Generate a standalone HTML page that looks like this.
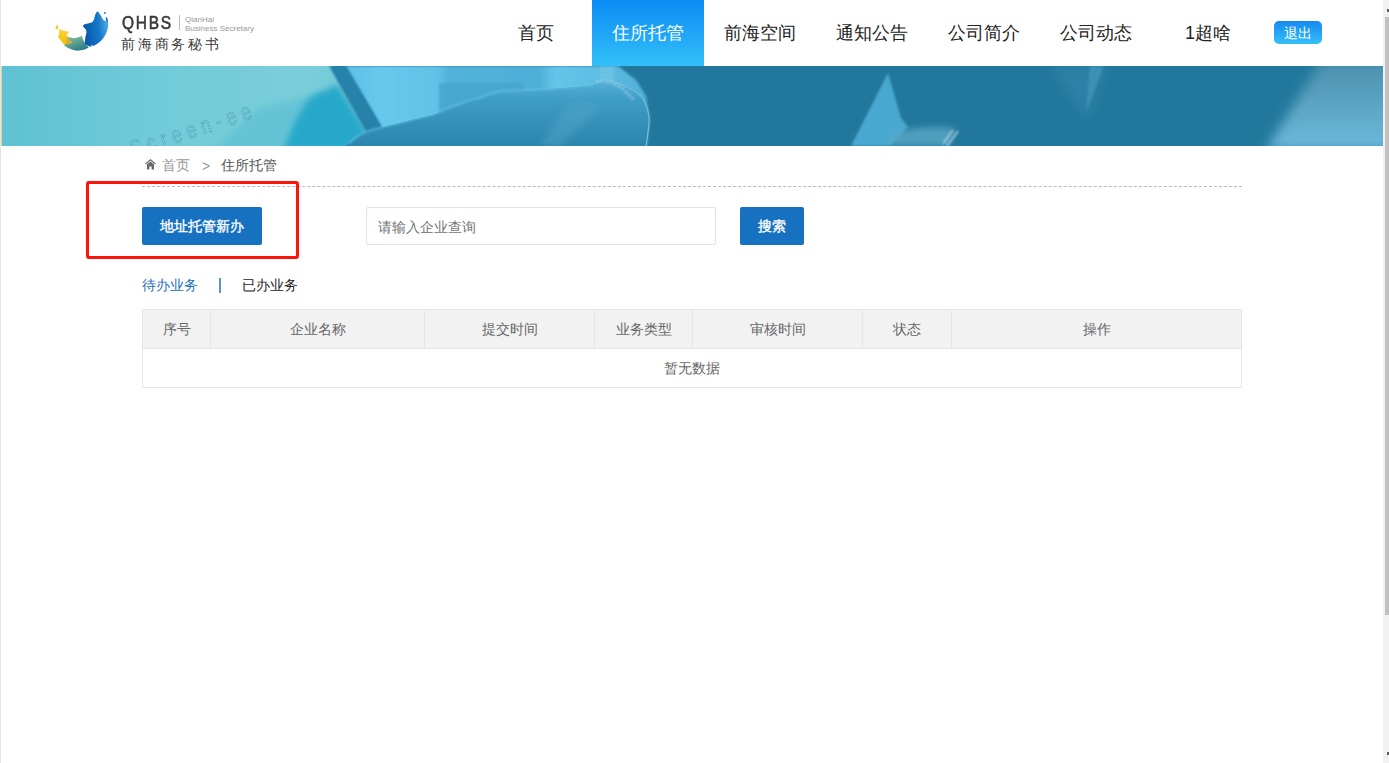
<!DOCTYPE html>
<html><head><meta charset="utf-8">
<style>
html,body{margin:0;padding:0;}
body{width:1389px;height:763px;overflow:hidden;position:relative;background:#fff;font-family:"Liberation Sans",sans-serif;color:#333;}
.abs{position:absolute;}
.lb{left:0;top:0;width:1px;height:763px;background:#e4e4e7;}
.sb{left:1383px;top:0;width:6px;height:763px;background:#f1f1f1;}
.thumb{left:1385px;top:17px;width:4px;height:598px;background:#c1c1c1;}
.nav{top:1px;height:65px;width:112px;line-height:65px;text-align:center;font-size:18px;color:#222;}
.nav.on{top:0;height:66px;line-height:67px;background:linear-gradient(#0b8bf4,#33c0f9);color:#fff;}
.logout{left:1274px;top:21px;width:48px;height:23px;border-radius:5px;background:linear-gradient(#1589f0,#35c0f8);color:#fff;font-size:14px;line-height:25px;font-weight:500;text-align:center;}
.banner{left:1px;top:66px;width:1382px;height:80px;overflow:hidden;background:#22789c;}
.crumb{top:157px;font-size:14px;line-height:16px;}
.dash{left:142px;top:186px;width:1100px;height:0;border-top:1px dashed #bbb;}
.redbox{left:86px;top:181px;width:207px;height:72px;border:3px solid #ff1409;border-radius:3px;}
.btn{top:207px;height:38px;background:#1671c1;color:#fff;font-size:14px;line-height:38px;text-align:center;border-radius:2px;font-weight:normal;-webkit-text-stroke:0.35px #fff;}
.inp{left:366px;top:207px;width:348px;height:36px;border:1px solid #e2e2e2;border-radius:2px;font-size:14px;line-height:38px;color:#737373;}
.tab{top:277px;font-size:14px;line-height:16px;}
table.t{position:absolute;left:142px;top:309px;border-collapse:collapse;width:1100px;font-size:14px;color:#666;table-layout:fixed;}
table.t td,table.t th{border:1px solid #e6e6e6;height:37px;padding:1px 0 0;text-align:center;font-weight:normal;}
table.t th{background:#f2f2f2;}
</style></head><body>
<div class="abs lb"></div>

<!-- logo -->
<svg class="abs" style="left:50px;top:5px" width="65" height="53" viewBox="0 0 936 763">
  <defs>
    <linearGradient id="gb" x1="0" y1="0.2" x2="1" y2="0"><stop offset="0" stop-color="#0a58ad"/><stop offset="0.55" stop-color="#1479c8"/><stop offset="1" stop-color="#62b8ea"/></linearGradient>
    <linearGradient id="gg" x1="0" y1="0" x2="0.6" y2="1"><stop offset="0" stop-color="#8cc2a2"/><stop offset="0.5" stop-color="#62a290"/><stop offset="1" stop-color="#2c7d8c"/></linearGradient>
    <linearGradient id="gy" x1="0" y1="0" x2="0" y2="1"><stop offset="0" stop-color="#fbd544"/><stop offset="1" stop-color="#f1bd00"/></linearGradient>
  </defs>
  <path d="M215 445 C260 455 300 470 350 478 C390 470 430 455 462 445 C470 490 490 540 560 610 C520 640 460 657 400 657 C330 652 260 625 205 582 C225 540 230 490 215 445 Z" fill="url(#gg)"/>
  <path d="M130 345 C170 360 220 375 272 385 C262 405 245 425 242 445 C260 490 300 520 325 545 C290 558 240 568 205 570 C175 535 140 495 115 458 C135 420 135 380 130 345 Z" fill="url(#gy)"/>
  <path d="M242 450 C262 490 300 522 325 545 C290 556 258 562 232 566 C238 520 240 480 242 450Z" fill="#c9a846" opacity="0.8"/>
  <path d="M98 283 C115 290 122 320 112 348 C95 352 72 338 78 322 C90 318 92 300 98 283 Z" fill="#f6c913"/>
  <path d="M685 92 C700 95 715 120 735 160 C750 190 765 215 785 228 C810 238 835 245 838 268 C842 320 825 400 780 460 C730 530 660 580 595 602 C570 600 530 580 505 562 C500 520 505 470 520 420 C528 395 530 370 510 345 C490 320 470 305 478 290 C490 278 530 268 575 258 C610 250 625 235 635 200 C650 140 665 92 685 92 Z" fill="url(#gb)"/>
  <path d="M600 572 C612 578 618 592 606 606 C592 604 588 590 600 572Z" fill="#fff"/>
  <circle cx="790" cy="115" r="13" fill="#1a78c8"/>
  <path d="M806 168 C828 172 840 222 830 258 C810 250 798 205 806 168Z" fill="#1a78c8"/>
</svg>
<div class="abs" style="left:122px;top:12px;font-size:18px;line-height:22px;letter-spacing:2px;color:#3a3a3a;-webkit-text-stroke:0.6px #3a3a3a;transform:scaleX(0.86);transform-origin:0 0;">QHBS</div>
<div class="abs" style="left:179px;top:15px;width:1px;height:15px;background:#bbb"></div>
<div class="abs" style="left:185px;top:15px;font-size:8px;line-height:9px;color:#999;">QianHai<br>Business Secretary</div>
<div class="abs" style="left:121px;top:36px;font-size:14px;line-height:16px;letter-spacing:2.8px;color:#3a3a3a;">前海商务秘书</div>

<!-- nav -->
<div class="abs nav" style="left:480px">首页</div>
<div class="abs nav on" style="left:592px">住所托管</div>
<div class="abs nav" style="left:704px">前海空间</div>
<div class="abs nav" style="left:816px">通知公告</div>
<div class="abs nav" style="left:928px">公司简介</div>
<div class="abs nav" style="left:1040px">公司动态</div>
<div class="abs nav" style="left:1152px">1超啥</div>
<div class="abs logout">退出</div>

<!-- banner -->
<svg class="abs" style="left:1px;top:66px" width="1382" height="80" viewBox="1 66 1382 80">
<defs>
<linearGradient id="bt" x1="0" y1="0" x2="1" y2="0"><stop offset="0" stop-color="#5fc1d3"/><stop offset="0.45" stop-color="#72cbd8"/><stop offset="0.8" stop-color="#79ced9"/><stop offset="1" stop-color="#70c9d7"/></linearGradient>
<linearGradient id="bm" x1="0" y1="0" x2="1" y2="0.6"><stop offset="0" stop-color="#6cc6d6" stop-opacity="0.3"/><stop offset="0.45" stop-color="#50bad3"/><stop offset="0.8" stop-color="#28a9cb"/><stop offset="1" stop-color="#1ea5ca"/></linearGradient>
<linearGradient id="bs" x1="0" y1="0" x2="1" y2="0"><stop offset="0" stop-color="#5cc0e4"/><stop offset="0.12" stop-color="#68c8ec"/><stop offset="0.3" stop-color="#62c2e6"/><stop offset="0.34" stop-color="#52b2d9"/><stop offset="0.64" stop-color="#50b0d7"/><stop offset="0.69" stop-color="#66c4e8"/><stop offset="0.84" stop-color="#5ebde2"/><stop offset="1" stop-color="#4eaed6"/></linearGradient>
<linearGradient id="bh" x1="0" y1="0" x2="0" y2="1"><stop offset="0" stop-color="#55b0d8"/><stop offset="0.3" stop-color="#3f9cc4"/><stop offset="1" stop-color="#2c85ac"/></linearGradient>
<linearGradient id="br" x1="0" y1="0" x2="0" y2="1"><stop offset="0" stop-color="#4a8fae"/><stop offset="0.45" stop-color="#5aa2c1"/><stop offset="1" stop-color="#6cbbde"/></linearGradient>
<filter id="bl1" x="-20%" y="-20%" width="140%" height="140%"><feGaussianBlur stdDeviation="1"/></filter>
<filter id="bl3" x="-30%" y="-30%" width="160%" height="160%"><feGaussianBlur stdDeviation="3"/></filter>
<filter id="bl6" x="-30%" y="-30%" width="160%" height="160%"><feGaussianBlur stdDeviation="6"/></filter>
</defs>
<rect x="1" y="66" width="1382" height="80" fill="#22789c"/>
<polygon points="1,66 331,66 376,146 1,146" fill="url(#bt)"/>
<path d="M215 150 C235 130 250 114 262 108 C280 103 300 98 314 95 C322 92 330 89 337 86 L376 150 Z" fill="#5dbfd4" opacity="0.7" filter="url(#bl3)"/>
<path d="M284 150 C292 126 302 104 314 95 C322 92 330 89 337 85 L378 150 Z" fill="#25a8cb" filter="url(#bl3)"/>
<text x="0" y="0" transform="translate(133 157) rotate(-18) scale(0.9 1.15)" font-family="Liberation Sans" font-size="20" fill="none" stroke="#3f8c9e" stroke-width="0.9" stroke-dasharray="1.4 1" opacity="0.6" letter-spacing="6">Screen-ee</text>
<rect x="0" y="66" width="2" height="80" fill="#d8d8a0"/>
<polygon points="345,66 618,66 636,80 646,96 650,120 647,146 392,146" fill="url(#bs)" filter="url(#bl1)"/><rect x="600" y="66" width="14" height="20" fill="#7ccbe8" opacity="0.45" filter="url(#bl1)"/><rect x="439" y="83" width="85" height="30" fill="#46a5ce" opacity="0.8" filter="url(#bl1)"/>
<polygon points="329,66 346,66 393,146 374,146" fill="#2782a9" filter="url(#bl1)"/>
<path d="M346 146 C352 140 362 132 375 129 C395 124 415 119 432 115 C450 108 465 101 480 98 C488 94 495 92 502 91 C520 90 535 90 548 89 C565 88 580 86 593 85 C600 82 604 80 606 80 C620 84 632 88 640 94 C646 102 649 112 649 120 C648 130 647 138 646 146 Z" fill="url(#bh)"/>
<path d="M349 144 C352 140 362 132 375 129 C395 124 415 119 432 115 C450 108 465 101 480 98 C488 94 495 92 502 91 C520 90 535 90 548 89 C565 88 580 86 593 85" fill="none" stroke="#6cc8ea" stroke-width="1.6" opacity="0.75" filter="url(#bl1)"/>
<path d="M540 146 C552 128 562 110 572 102 L600 104 C590 120 570 136 562 146 Z" fill="#5aa9cc" opacity="0.4" filter="url(#bl3)"/>
<path d="M606 80 C622 84 634 90 641 96 C647 104 650 116 649 124 C648 132 647 140 646 146" fill="none" stroke="#8ccbe3" stroke-width="1.2" opacity="0.7"/>
<path d="M596 82 C605 80 614 83 622 88 L634 100" fill="none" stroke="#a6d8ec" stroke-width="3" stroke-dasharray="2.5 2" opacity="0.7" filter="url(#bl1)"/>
<polygon points="888,73 901,118 908,127 890,146 851,146" fill="#4aa8d0" filter="url(#bl1)"/>
<path d="M893 132 C910 128 935 126 955 128 L948 146 L888 146 Z" fill="#5aa9c6" opacity="0.8" filter="url(#bl3)"/>
<path d="M943 144 L953 130 M947 146 L958 131" stroke="#b8dcea" stroke-width="1.3" filter="url(#bl1)"/>
<path d="M1050 66 L1106 66 L1088 120 Z" fill="#3a8db2" opacity="0.45" filter="url(#bl6)"/><path d="M1090 66 L1104 66 L1086 112 Z" fill="#4a9cc0" opacity="0.6" filter="url(#bl1)"/>
<polygon points="1322,60 1395,60 1395,150 1266,150" fill="url(#br)" filter="url(#bl6)"/>
<rect x="1383" y="60" width="10" height="90" fill="#fff"/>
</svg>

<!-- breadcrumb -->
<svg class="abs" style="left:145px;top:159px" width="11" height="11" viewBox="0 0 11 11"><polyline points="0.6,5 5.5,0.8 10.4,5" fill="none" stroke="#666" stroke-width="1.1"/><path d="M5.5 2.6 L9 5.6 L9 10.6 L6.6 10.6 L6.6 7.6 L4.4 7.6 L4.4 10.6 L2 10.6 L2 5.6Z" fill="#666"/></svg>
<div class="abs crumb" style="left:162px;color:#999">首页</div>
<div class="abs crumb" style="left:202px;top:158px;color:#999">&gt;</div>
<div class="abs crumb" style="left:221px;color:#555">住所托管</div>
<div class="abs dash"></div>

<div class="abs redbox"></div>
<div class="abs btn" style="left:142px;width:120px">地址托管新办</div>
<div class="abs inp"><span style="padding-left:11px">请输入企业查询</span></div>
<div class="abs btn" style="left:740px;width:64px">搜索</div>

<div class="abs tab" style="left:142px;color:#1e6eb8">待办业务</div>
<div class="abs" style="left:219px;top:278px;width:1.5px;height:15px;background:#5b95cf"></div>
<div class="abs tab" style="left:242px;color:#222">已办业务</div>

<table class="t">
<colgroup><col style="width:68px"><col style="width:214px"><col style="width:170px"><col style="width:98px"><col style="width:170px"><col style="width:89px"><col></colgroup>
<tr><th>序号</th><th>企业名称</th><th>提交时间</th><th>业务类型</th><th>审核时间</th><th>状态</th><th>操作</th></tr>
<tr><td colspan="7">暂无数据</td></tr>
</table>

<div class="abs sb"></div>
<div class="abs thumb"></div>
<div class="abs" style="left:1387px;top:9px;width:2px;height:3px;background:#606060"></div>
<div class="abs" style="left:1387px;top:752px;width:2px;height:3px;background:#606060"></div>
</body></html>
